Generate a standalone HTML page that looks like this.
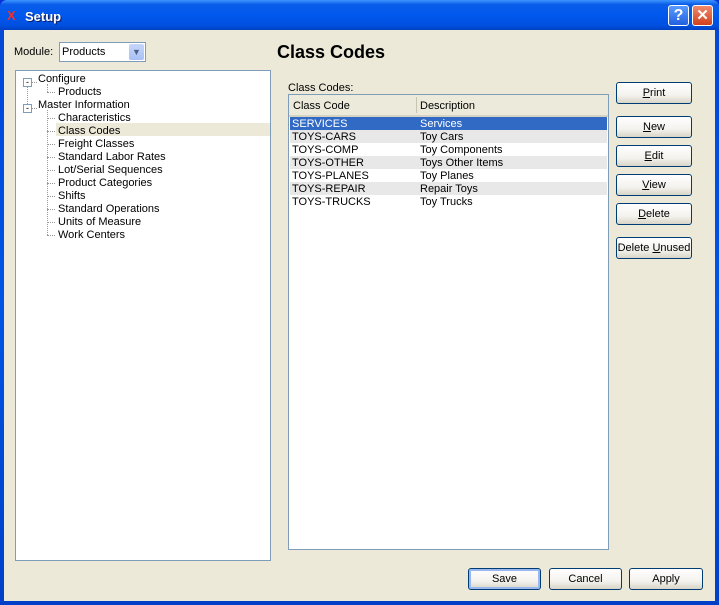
<!DOCTYPE html><html><head><style>
*{margin:0;padding:0;box-sizing:border-box}
body{width:719px;height:605px;overflow:hidden;font-family:"Liberation Sans",sans-serif;font-size:11px;color:#000;background:#0831d9}
.win{position:absolute;left:0;top:0;width:719px;height:605px;background:linear-gradient(#0a5fe8,#0347d6 4%,#0055e5 50%,#0040c8);border-radius:7px 7px 0 0}
.title{position:absolute;left:0;top:0;width:719px;height:30px;background:linear-gradient(#3d95ff,#0a5de8 15%,#0058ee 50%,#0050e0 85%,#0040c0);border-radius:7px 7px 0 0}
.title span{position:absolute;left:25px;top:9px;color:#fff;font-weight:bold;font-size:13px;text-shadow:1px 1px #0a1f6a}
.client{position:absolute;left:4px;top:30px;width:711px;height:571px;background:#ece9d8}
.a{position:absolute;white-space:nowrap}
.btn{position:absolute;border:1px solid #003c74;border-radius:3px;background:linear-gradient(#fff,#f4f3ee 60%,#d8d5c8);text-align:center;line-height:21px}
.tb{position:absolute;top:5px;width:21px;height:21px;border:1px solid #fff;border-radius:3px;color:#fff;font-weight:bold;text-align:center}
.row{position:absolute;left:1px;width:318px;height:13px;line-height:14px}
.row span{position:absolute}
.h{position:absolute;width:8px;border-top:1px dotted #999}
</style></head><body><div class="win">
<div class="title"><span>Setup</span>
<div class="a" style="left:7px;top:8px;color:#e33;font-weight:bold;font-size:13px">X</div>
<div class="tb" style="left:668px;background:linear-gradient(#5a9bff,#2160e0);font-size:16px;line-height:19px">?</div>
<div class="tb" style="left:692px;background:linear-gradient(#f08a6a,#d2401e);font-size:15px;line-height:19px">✕</div>
</div>
<div class="client"></div>
<div class="a" style="left:14px;top:46px">Module:</div>
<div class="a" style="left:59px;top:42px;width:87px;height:20px;background:#fff;border:1px solid #7f9db9"><span style="position:absolute;left:2px;top:3px">Products</span><div style="position:absolute;right:1px;top:1px;width:15px;height:16px;background:linear-gradient(#c6d6fb,#a8c0f5);border-radius:2px;color:#4d6185;font-size:9px;text-align:center;line-height:16px">▼</div></div>
<div class="a" style="left:277px;top:42px;font-size:18px;font-weight:bold">Class Codes</div>
<div class="a" style="left:15px;top:70px;width:256px;height:491px;background:#fff;border:1px solid #7f9db9">
<div class="a" style="left:7px;top:7px;width:9px;height:9px;border:1px solid #7f9db9;font-size:9px;line-height:6px;text-align:center">-</div>
<div class="a" style="left:7px;top:33px;width:9px;height:9px;border:1px solid #7f9db9;font-size:9px;line-height:6px;text-align:center">-</div>
<div class="a" style="left:11px;top:16px;height:17px;border-left:1px dotted #999"></div>
<div class="h" style="left:16px;top:11px;width:5px"></div>
<div class="h" style="left:16px;top:37px;width:5px"></div>
<div class="a" style="left:31px;top:13px;height:8px;border-left:1px dotted #999"></div>
<div class="h" style="left:31px;top:21px"></div>
<div class="a" style="left:31px;top:39px;height:125px;border-left:1px dotted #999"></div>
<div class="h" style="left:31px;top:47px"></div><div class="h" style="left:31px;top:60px"></div><div class="h" style="left:31px;top:73px"></div><div class="h" style="left:31px;top:86px"></div><div class="h" style="left:31px;top:99px"></div><div class="h" style="left:31px;top:112px"></div><div class="h" style="left:31px;top:125px"></div><div class="h" style="left:31px;top:138px"></div><div class="h" style="left:31px;top:151px"></div><div class="h" style="left:31px;top:164px"></div>
<div class="a" style="left:22px;top:2px">Configure</div>
<div class="a" style="left:42px;top:15px">Products</div>
<div class="a" style="left:22px;top:28px">Master Information</div>
<div class="a" style="left:40px;top:52px;width:214px;height:13px;background:#ece9d8"></div>
<div class="a" style="left:42px;top:41px;line-height:13px">Characteristics<br>Class Codes<br>Freight Classes<br>Standard Labor Rates<br>Lot/Serial Sequences<br>Product Categories<br>Shifts<br>Standard Operations<br>Units of Measure<br>Work Centers</div>
</div>
<div class="a" style="left:288px;top:82px">Class Codes:</div>
<div class="a" style="left:288px;top:94px;width:321px;height:456px;background:#fff;border:1px solid #7f9db9">
<div class="a" style="left:0;top:0;width:319px;height:22px;background:#ebeadb;border-bottom:2px solid #d6d3c3"><span class="a" style="left:4px;top:5px">Class Code</span><span class="a" style="left:127px;top:2px;height:16px;border-left:1px solid #c7c5b2"></span><span class="a" style="left:131px;top:5px">Description</span></div>
<div class="row" style="top:22px;background:#316ac5;color:#fff;width:317px"><span style="left:2px">SERVICES</span><span style="left:130px">Services</span></div>
<div class="row" style="top:35px;background:#e8e8e8;width:317px"><span style="left:2px">TOYS-CARS</span><span style="left:130px">Toy Cars</span></div>
<div class="row" style="top:48px"><span style="left:2px">TOYS-COMP</span><span style="left:130px">Toy Components</span></div>
<div class="row" style="top:61px;background:#e8e8e8;width:317px"><span style="left:2px">TOYS-OTHER</span><span style="left:130px">Toys Other Items</span></div>
<div class="row" style="top:74px"><span style="left:2px">TOYS-PLANES</span><span style="left:130px">Toy Planes</span></div>
<div class="row" style="top:87px;background:#e8e8e8;width:317px"><span style="left:2px">TOYS-REPAIR</span><span style="left:130px">Repair Toys</span></div>
<div class="row" style="top:100px"><span style="left:2px">TOYS-TRUCKS</span><span style="left:130px">Toy Trucks</span></div>
</div>
<div class="btn" style="left:616px;top:82px;width:76px;height:22px"><u>P</u>rint</div>
<div class="btn" style="left:616px;top:116px;width:76px;height:22px"><u>N</u>ew</div>
<div class="btn" style="left:616px;top:145px;width:76px;height:22px"><u>E</u>dit</div>
<div class="btn" style="left:616px;top:174px;width:76px;height:22px"><u>V</u>iew</div>
<div class="btn" style="left:616px;top:203px;width:76px;height:22px"><u>D</u>elete</div>
<div class="btn" style="left:616px;top:237px;width:76px;height:22px">Delete <u>U</u>nused</div>
<div class="btn" style="left:468px;top:568px;width:73px;height:22px;box-shadow:inset 0 0 0 2px #9ab8f0">Save</div>
<div class="btn" style="left:549px;top:568px;width:73px;height:22px">Cancel</div>
<div class="btn" style="left:629px;top:568px;width:74px;height:22px">Apply</div>
</div></body></html>
